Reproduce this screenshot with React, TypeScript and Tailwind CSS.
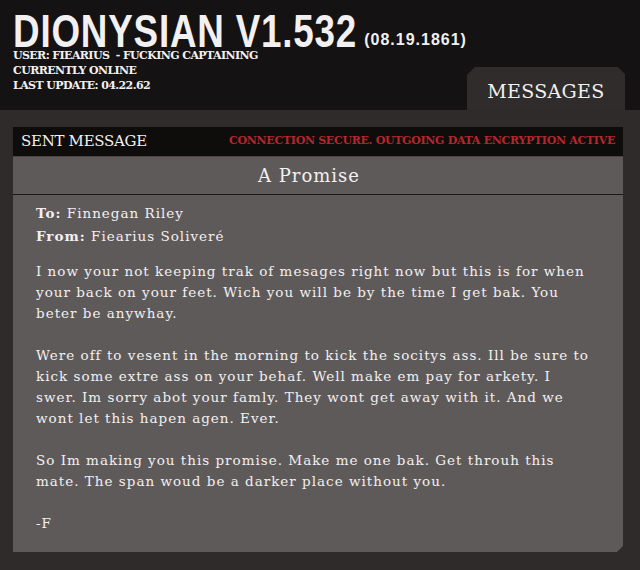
import React from "react";

const paragraphs = [
  [
    "I now your not keeping trak of mesages right now but this is for when",
    "your back on your feet. Wich you will be by the time I get bak. You",
    "beter be anywhay.",
  ],
  [
    "Were off to vesent in the morning to kick the socitys ass. Ill be sure to",
    "kick some extre ass on your behaf. Well make em pay for arkety. I",
    "swer. Im sorry abot your famly. They wont get away with it. And we",
    "wont let this hapen agen. Ever.",
  ],
  [
    "So Im making you this promise. Make me one bak. Get throuh this",
    "mate. The span woud be a darker place without you.",
  ],
  ["-F"],
];

const serif = "font-['DejaVu_Serif','Liberation_Serif',serif]";

const App = () => {
  return (
    <div className="w-[640px] h-[570px] bg-[#2f2b2a] overflow-hidden text-[#f2f0f0]">
      {/* top header */}
      <div className="h-[110px] bg-[#141212] flex justify-between items-end">
        <div className="self-start pl-[13px] pt-[14px]">
          <div className="flex items-end">
            <span className="inline-block origin-left scale-x-[0.8] font-['Liberation_Sans',sans-serif] font-bold text-[46px] leading-[34px] tracking-[1px] whitespace-nowrap">
              DIONYSIAN V1.532
            </span>
            <span className="ml-[-79px] font-['Liberation_Sans',sans-serif] font-bold text-[16px] leading-[16px] tracking-[1px] whitespace-nowrap">
              (08.19.1861)
            </span>
          </div>
          <div className={`${serif} font-bold text-[11px] leading-[15px] tracking-[-0.6px]`}>
            <div>USER: FIEARIUS &nbsp;- FUCKING CAPTAINING</div>
            <div>CURRENTLY ONLINE</div>
            <div>LAST UPDATE: 04.22.62</div>
          </div>
        </div>
        <div className="mr-[15px] w-[159px] h-[43px] bg-[#2f2c2b] [clip-path:polygon(8px_0,151px_0,159px_8px,159px_100%,0_100%,0_8px)] flex items-center justify-center pt-[6px]">
          <span className={`${serif} text-[19px] tracking-[0.3px]`}>MESSAGES</span>
        </div>
      </div>

      {/* message panel */}
      <div className="ml-[13px] mt-[17px] w-[610px] h-[425px] bg-[#5f5a5a] flex flex-col shadow-[3px_3px_4px_rgba(0,0,0,0.35)] [clip-path:polygon(0_0,100%_0,100%_calc(100%-6px),calc(100%-6px)_100%,0_100%)]">
        <div className="h-[30px] bg-[#0f0c0c] flex items-center justify-between pl-[8px] pr-[8px] border-b border-[#4a4545]">
          <span className={`${serif} text-[15px] tracking-[-0.3px]`}>SENT MESSAGE</span>
          <span className={`${serif} font-bold text-[11px] text-[#b5272b] tracking-[-0.3px]`}>
            CONNECTION SECURE. OUTGOING DATA ENCRYPTION ACTIVE
          </span>
        </div>
        <div className="h-[38px] flex items-center justify-center border-b border-[#1c1818] pr-[18px]">
          <span className={`${serif} text-[18px] tracking-[1px]`}>A Promise</span>
        </div>
        <div className={`${serif} text-[13.5px] pl-[23px] pt-[7px] tracking-[1px]`}>
          <div className="leading-[23px]">
            <div>
              <span className="font-bold">To:</span> Finnegan Riley
            </div>
            <div>
              <span className="font-bold">From:</span> Fiearius Soliveré
            </div>
          </div>
          <div className="mt-[13px] flex flex-col gap-[21px] leading-[21px]">
            {paragraphs.map((para, i) => (
              <div key={i}>
                {para.map((line, j) => (
                  <div key={j} className="whitespace-nowrap">
                    {line}
                  </div>
                ))}
              </div>
            ))}
          </div>
        </div>
      </div>
    </div>
  );
};

export default App;
